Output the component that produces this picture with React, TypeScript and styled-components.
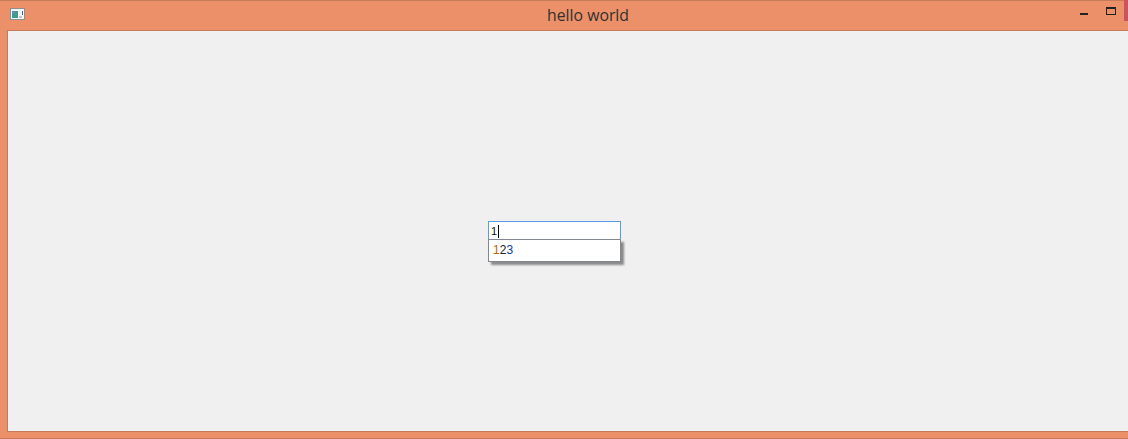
import styled, { createGlobalStyle } from "styled-components";

const Global = createGlobalStyle`
  html, body {
    margin: 0;
    padding: 0;
    height: 100%;
    overflow: hidden;
    background: #eb9068;
  }
`;

const Frame = styled.div`
  box-sizing: border-box;
  width: 1128px;
  height: 439px;
  display: flex;
  flex-direction: column;
  background: #eb9068;
  border-top: 1px solid #c67a5a;
  border-bottom: 1px solid #c67a5a;
  font-family: "Open Sans", "Noto Sans", sans-serif;
`;

const TitleBar = styled.div`
  position: relative;
  flex: 0 0 29px;
  display: flex;
  align-items: center;
  justify-content: center;
`;

const Title = styled.span`
  font-size: 15.8px;
  color: #33302e;
  margin-top: -1px;
  margin-left: 48px;
`;

const AppIcon = styled.svg`
  position: absolute;
  left: 10px;
  top: 7px;
`;

const Controls = styled.div`
  position: absolute;
  right: 0;
  top: -1px;
  display: flex;
  align-items: flex-start;
`;

const MinButton = styled.div`
  width: 8px;
  height: 2px;
  background: #222;
  margin: 13px 18px 0 0;
`;

const MaxButton = styled.div`
  box-sizing: border-box;
  width: 10px;
  height: 8px;
  border: 1px solid #222;
  border-top-width: 2px;
  margin: 7px 8px 0 0;
`;

const CloseEdge = styled.div`
  width: 4px;
  height: 21px;
  background: #c9555a;
`;

const Client = styled.div`
  flex: 1;
  margin-left: 7px;
  display: flex;
  flex-direction: column;
  align-items: flex-start;
  background: #f0f0f0;
  border-top: 1px solid #c67a5a;
  border-left: 1px solid #c67a5a;
  border-bottom: 1px solid #c67a5a;
  padding: 190px 0 0 480px;
  margin-bottom: 6px;
`;

const Combo = styled.div`
  position: relative;
  width: 133px;
`;

const Input = styled.div`
  box-sizing: border-box;
  height: 18px;
  background: #fff;
  border: 1px solid #569de5;
  border-bottom: 0;
  padding: 1px 0 0 2px;
  font-family: "Liberation Sans", Arial, sans-serif;
  font-size: 11px;
  line-height: 16px;
  color: #111;
  display: flex;
  align-items: center;
`;

const Caret = styled.span`
  display: inline-block;
  width: 1px;
  height: 13px;
  background: #000;
  margin-left: 1px;
`;

const Popup = styled.div`
  box-sizing: border-box;
  height: 23px;
  background: #fff;
  border: 1px solid #828790;
  box-shadow: 3px 3px 2px #8a8a8a;
  padding-left: 4px;
  font-family: "Liberation Sans", Arial, sans-serif;
  font-size: 12px;
  line-height: 20px;
`;

const Digit = styled.span<{ $color: string }>`
  color: ${(p) => p.$color};
`;

export default function App() {
  return (
    <>
      <Global />
      <Frame>
        <TitleBar>
          <AppIcon width="16" height="12" viewBox="0 0 16 12">
            <rect x="0.5" y="0.5" width="14" height="11" fill="#f4f6f6" stroke="#8b8f92" />
            <rect x="2" y="3" width="6" height="7" fill="#3f9a8e" />
            <rect x="2" y="3" width="3" height="3" fill="#5a8fb0" />
            <rect x="12" y="3" width="1" height="4" fill="#2c6fb0" />
            <rect x="9" y="8" width="3" height="2" fill="#c4c8c8" />
          </AppIcon>
          <Title>hello world</Title>
          <Controls>
            <MinButton />
            <MaxButton />
            <CloseEdge />
          </Controls>
        </TitleBar>
        <Client>
          <Combo>
            <Input>
              1<Caret />
            </Input>
            <Popup>
              <Digit $color="#b8650a">1</Digit>
              <Digit $color="#222">2</Digit>
              <Digit $color="#0b4088">3</Digit>
            </Popup>
          </Combo>
        </Client>
      </Frame>
    </>
  );
}
